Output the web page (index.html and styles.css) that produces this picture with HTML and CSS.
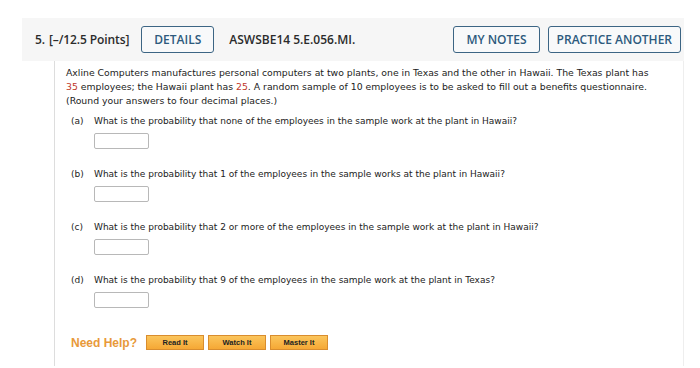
FILE: index.html
```html
<!DOCTYPE html>
<html lang="en">
<head>
    <meta charset="UTF-8">
    <title>Question 5</title>
    <link rel="stylesheet" href="styles.css">
</head>
<body>
<div class="question">
    <div class="qHeader">
        <span class="qPoints">5. <span class="bracket">[–/12.5 Points]</span></span>
        <span class="hBtn">DETAILS</span>
        <span class="qCode">ASWSBE14 5.E.056.MI.</span>
        <span class="spacer"></span>
        <span class="hBtn">MY NOTES</span>
        <span class="hBtn last">PRACTICE ANOTHER</span>
    </div>
    <div class="qBody">
        <p class="intro">Axline Computers manufactures personal computers at two plants, one in Texas and the other in Hawaii. The Texas plant has <span class="num">35</span> employees; the Hawaii plant has <span class="num">25</span>. A random sample of 10 employees is to be asked to fill out a benefits questionnaire. (Round your answers to four decimal places.)</p>

        <div class="part">
            <div class="partRow"><span class="letter">(a)</span><span>What is the probability that none of the employees in the sample work at the plant in Hawaii?</span></div>
            <div class="answer"></div>
        </div>
        <div class="part">
            <div class="partRow"><span class="letter">(b)</span><span>What is the probability that 1 of the employees in the sample works at the plant in Hawaii?</span></div>
            <div class="answer"></div>
        </div>
        <div class="part">
            <div class="partRow"><span class="letter">(c)</span><span>What is the probability that 2 or more of the employees in the sample work at the plant in Hawaii?</span></div>
            <div class="answer"></div>
        </div>
        <div class="part">
            <div class="partRow"><span class="letter">(d)</span><span>What is the probability that 9 of the employees in the sample work at the plant in Texas?</span></div>
            <div class="answer"></div>
        </div>

        <div class="help">
            <span class="helpLabel">Need Help?</span>
            <span class="helpBtn">Read It</span>
            <span class="helpBtn">Watch It</span>
            <span class="helpBtn">Master It</span>
        </div>
    </div>
</div>
</body>
</html>
```

FILE: styles.css
```css
body {
    margin: 0;
    padding: 0;
    background: white;
    font-family: "DejaVu Sans", Verdana, sans-serif;
    color: #222;
}

.question {
    margin: 18px 16px 0 22px;
}

.qHeader {
    display: flex;
    align-items: center;
    height: 43px;
    background: #f6f6f6;
    padding: 0 3px 0 13px;
    font-family: "Open Sans", sans-serif;
    font-weight: 600;
    font-size: 12px;
    color: #2b2b2b;
}

.qPoints {
    margin-right: 12px;
    letter-spacing: -0.1px;
}
.bracket {
    margin-left: 1px;
}

.hBtn {
    display: inline-flex;
    align-items: center;
    height: 25px;
    padding: 0 12px;
    border: 1.5px solid #3c6584;
    border-radius: 3px;
    color: #2d5a7d;
    background: #f8f9fa;
    font-weight: 600;
    margin-right: 8px;
}
.hBtn.last {
    margin-right: 0;
    padding: 0 8px;
}

.qCode {
    margin-left: 7px;
}

.spacer {
    flex: 1;
}

.qBody {
    margin-left: 32px;
    border-left: 1px solid #ddd;
    border-right: 1px solid #eee;
    padding: 5px 0 16px 11px;
}

.intro {
    margin: 0;
    max-width: 588px;
    font-size: 9.3px;
    line-height: 14px;
    color: #222;
}

.num {
    color: #c0392b;
}

.part {
    margin-top: 7px;
    font-size: 9px;
    line-height: 13px;
}

.partRow {
    display: flex;
    padding-left: 5px;
}

.letter {
    width: 23px;
}

.answer {
    width: 53px;
    height: 14px;
    margin: 5px 0 19px 28px;
    border: 1px solid #b8b8b8;
    border-radius: 2px;
}

.help {
    display: flex;
    align-items: center;
    margin-top: 27px;
    padding-left: 5px;
}

.helpLabel {
    font-family: "Liberation Sans", Arial, sans-serif;
    font-weight: bold;
    font-size: 12px;
    color: #e8993a;
    margin-right: 9px;
}

.helpBtn {
    display: inline-flex;
    justify-content: center;
    align-items: center;
    width: 56px;
    height: 13px;
    margin-right: 4px;
    background: linear-gradient(#fbc55c, #f5a835);
    border: 1px solid #d98d2e;
    font-family: "Liberation Sans", Arial, sans-serif;
    font-weight: bold;
    font-size: 7.5px;
    color: #222;
}
```
